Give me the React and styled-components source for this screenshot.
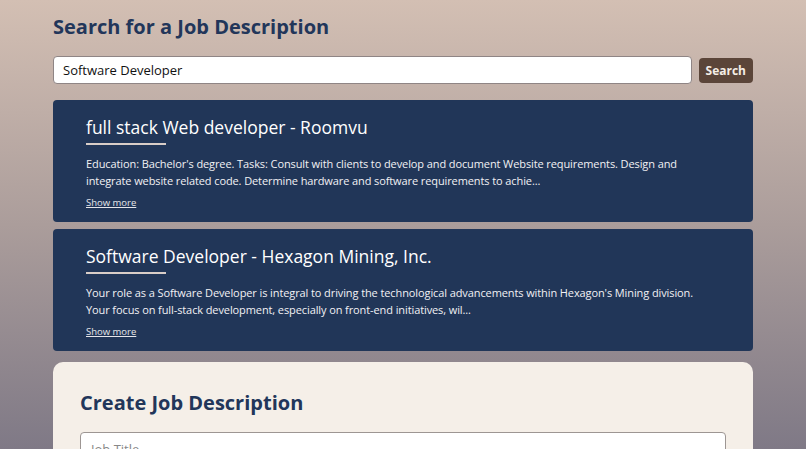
import React, { useState } from 'react'
import styled, { createGlobalStyle } from 'styled-components'

const GlobalStyle = createGlobalStyle`
  * { box-sizing: border-box; }
  html, body { margin: 0; padding: 0; }
  body {
    font-family: "Open Sans", "Noto Sans", sans-serif;
    min-height: 100vh;
    background: linear-gradient(180deg, #d3bfb3 0%, #ab9d9b 50%, #7f7986 100%);
    background-attachment: fixed;
  }
`

const jobs = [
  {
    id: 1,
    title: 'full stack Web developer - Roomvu',
    text: "Education: Bachelor's degree. Tasks: Consult with clients to develop and document Website requirements. Design and integrate website related code. Determine hardware and software requirements to achie...",
  },
  {
    id: 2,
    title: 'Software Developer - Hexagon Mining, Inc.',
    text: "Your role as a Software Developer is integral to driving the technological advancements within Hexagon's Mining division. Your focus on full-stack development, especially on front-end initiatives, wil...",
  },
]

export default function App() {
  const [query, setQuery] = useState('Software Developer')

  return (
    <>
      <GlobalStyle />
      <Page>
        <Heading>Search for a Job Description</Heading>
        <SearchRow>
          <SearchInput value={query} onChange={(e) => setQuery(e.target.value)} />
          <SearchButton>Search</SearchButton>
        </SearchRow>
        <Results>
          {jobs.map((job) => (
            <JobCard key={job.id}>
              <JobTitle>{job.title}</JobTitle>
              <Underline />
              <JobText>{job.text}</JobText>
              <ShowMore href="#">Show more</ShowMore>
            </JobCard>
          ))}
        </Results>
        <CreatePanel>
          <PanelTitle>Create Job Description</PanelTitle>
          <PanelInput placeholder="Job Title" />
        </CreatePanel>
      </Page>
    </>
  )
}

const Page = styled.div`
  max-width: 700px;
  margin: 0 auto;
  padding: 12px 0 40px;
`

const Heading = styled.h1`
  margin: 0 0 14px;
  font-size: 20px;
  font-weight: 700;
  color: #22365a;
  line-height: 30px;
`

const SearchRow = styled.div`
  display: flex;
  align-items: center;
  gap: 7px;
`

const SearchInput = styled.input`
  flex: 1;
  height: 28px;
  padding: 0 9px;
  border: 1px solid #8f8585;
  border-radius: 4px;
  background: #fff;
  font-family: inherit;
  font-size: 13px;
  color: #111;
  outline: none;
`

const SearchButton = styled.button`
  height: 25px;
  padding: 0 7px;
  border: none;
  border-radius: 4px;
  background: #5b4539;
  color: #f4ede6;
  font-family: inherit;
  font-size: 12px;
  font-weight: 700;
  cursor: pointer;
`

const Results = styled.div`
  display: flex;
  flex-direction: column;
  gap: 7px;
  margin-top: 16px;
`

const JobCard = styled.div`
  background: #213658;
  border-radius: 4px;
  padding: 14px 45px 15px 33px;
  color: #fff;
  height: 122px;
`

const JobTitle = styled.h2`
  margin: 0;
  font-size: 17.5px;
  font-weight: 500;
  line-height: 26px;
`

const Underline = styled.div`
  width: 80px;
  height: 2px;
  background: #d9cec8;
  margin: 3px 0 10px;
`

const JobText = styled.p`
  margin: 0;
  font-size: 11px;
  letter-spacing: -0.1px;
  line-height: 17px;
  color: #f1f1f4;
`

const ShowMore = styled.a`
  display: inline-block;
  margin-top: 0;
  font-size: 9.5px;
  color: #e6e6ea;
  text-decoration: underline;
`

const CreatePanel = styled.div`
  margin-top: 11px;
  background: #f5efe8;
  border-radius: 10px;
  padding: 26px 27px 30px;
`

const PanelTitle = styled.h2`
  margin: 0 0 14px;
  font-size: 20px;
  font-weight: 700;
  color: #22365a;
  line-height: 30px;
`

const PanelInput = styled.input`
  width: 100%;
  height: 34px;
  padding: 0 10px;
  border: 1px solid #9d9693;
  border-radius: 4px;
  background: #fff;
  font-family: inherit;
  font-size: 13px;
  &::placeholder { color: #888; }
`
